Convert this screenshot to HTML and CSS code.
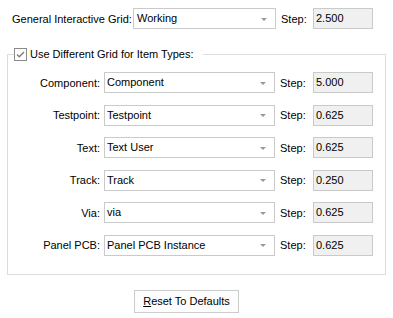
FILE: index.html
```html
<!DOCTYPE html>
<html>
<head>
<meta charset="utf-8">
<link rel="stylesheet" href="styles.css">
</head>
<body>
<div class="dialog">
  <div class="top-row">
    <span class="top-label">General Interactive Grid:</span>
    <div class="combo combo-top"><span class="combo-text">Working</span><span class="arrow"></span></div>
    <span class="step-label">Step:</span>
    <div class="step-box">2.500</div>
  </div>

  <fieldset class="group">
    <legend class="group-legend">
      <span class="check">
        <svg width="13" height="13" viewBox="0 0 13 13"><rect x="0.5" y="0.5" width="12" height="12" fill="#fff" stroke="#8a8a8a"/><polyline points="3,6.5 5.3,8.8 10,4" fill="none" stroke="#7d7d7d" stroke-width="1.4"/></svg>
      </span>
      <span class="legend-text">Use Different Grid for Item Types:</span>
    </legend>
    <div class="rows">
      <div class="row">
        <span class="row-label">Component:</span>
        <div class="combo combo-row"><span class="combo-text">Component</span><span class="arrow"></span></div>
        <span class="step-label">Step:</span>
        <div class="step-box">5.000</div>
      </div>
      <div class="row">
        <span class="row-label">Testpoint:</span>
        <div class="combo combo-row"><span class="combo-text">Testpoint</span><span class="arrow"></span></div>
        <span class="step-label">Step:</span>
        <div class="step-box">0.625</div>
      </div>
      <div class="row">
        <span class="row-label">Text:</span>
        <div class="combo combo-row"><span class="combo-text">Text User</span><span class="arrow"></span></div>
        <span class="step-label">Step:</span>
        <div class="step-box">0.625</div>
      </div>
      <div class="row">
        <span class="row-label">Track:</span>
        <div class="combo combo-row"><span class="combo-text">Track</span><span class="arrow"></span></div>
        <span class="step-label">Step:</span>
        <div class="step-box">0.250</div>
      </div>
      <div class="row">
        <span class="row-label">Via:</span>
        <div class="combo combo-row"><span class="combo-text">via</span><span class="arrow"></span></div>
        <span class="step-label">Step:</span>
        <div class="step-box">0.625</div>
      </div>
      <div class="row">
        <span class="row-label">Panel PCB:</span>
        <div class="combo combo-row"><span class="combo-text">Panel PCB Instance</span><span class="arrow"></span></div>
        <span class="step-label">Step:</span>
        <div class="step-box">0.625</div>
      </div>
    </div>
  </fieldset>

  <div class="button-row">
    <button class="btn"><u>R</u>eset To Defaults</button>
  </div>
</div>
</body>
</html>
```

FILE: styles.css
```css
html, body {
  margin: 0;
  padding: 0;
  background: #ffffff;
}

body {
  font-family: "Liberation Sans", Arial, sans-serif;
  font-size: 11px;
  color: #000;
  width: 393px;
  height: 318px;
  overflow: hidden;
}

.dialog {
  display: flex;
  flex-direction: column;
}

.top-row {
  display: flex;
  align-items: center;
  padding: 8px 0 0 12px;
  height: 21px;
}

.top-label {
  width: 121px;
  white-space: nowrap;
}

.combo {
  box-sizing: border-box;
  height: 21px;
  border: 1px solid #cacaca;
  background: #fff;
  display: flex;
  align-items: center;
  justify-content: space-between;
  padding-left: 3px;
  padding-right: 8px;
}

.combo-top {
  width: 143px;
}

.combo-row {
  width: 171px;
  padding-left: 2px;
}

.combo-text {
  line-height: 19px;
  white-space: nowrap;
}

.arrow {
  width: 0;
  height: 0;
  border-left: 3px solid transparent;
  border-right: 3px solid transparent;
  border-top: 3px solid #9a9a9a;
  margin-top: 1px;
}

.step-label {
  box-sizing: border-box;
  width: 37px;
  padding-left: 5px;
  white-space: nowrap;
}

.top-row .step-label {
  width: 37px;
}

.step-box {
  box-sizing: border-box;
  width: 60px;
  height: 21px;
  border: 1px solid #cacaca;
  background: #f0f0f0;
  padding-left: 2px;
  line-height: 19px;
}

.group {
  margin: 19px 0 0 7px;
  padding: 0 0 18px 0;
  width: 379px;
  box-sizing: border-box;
  border: 1px solid #dcdcdc;
  min-width: 0;
}

.group-legend {
  display: flex;
  align-items: center;
  margin-left: 6px;
  padding: 0 10px 0 0;
  height: 13px;
}

.check {
  display: block;
  width: 13px;
  height: 13px;
}

.check svg {
  display: block;
}

.legend-text {
  margin-left: 3px;
  line-height: 13px;
  white-space: nowrap;
}

.rows {
  display: flex;
  flex-direction: column;
  gap: 11.5px;
  padding-top: 11px;
}

.row {
  display: flex;
  align-items: center;
  height: 21px;
}

.row-label {
  box-sizing: border-box;
  width: 96px;
  padding-right: 4px;
  text-align: right;
  white-space: nowrap;
}

.row .step-label {
  width: 38px;
}

.button-row {
  display: flex;
  padding: 15px 0 0 134px;
}

.btn {
  box-sizing: border-box;
  width: 105px;
  height: 23px;
  border: 1px solid #cccccc;
  background: #fdfdfd;
  font-family: "Liberation Sans", Arial, sans-serif;
  font-size: 11px;
  color: #000;
  padding: 0;
  border-radius: 0;
}
```
